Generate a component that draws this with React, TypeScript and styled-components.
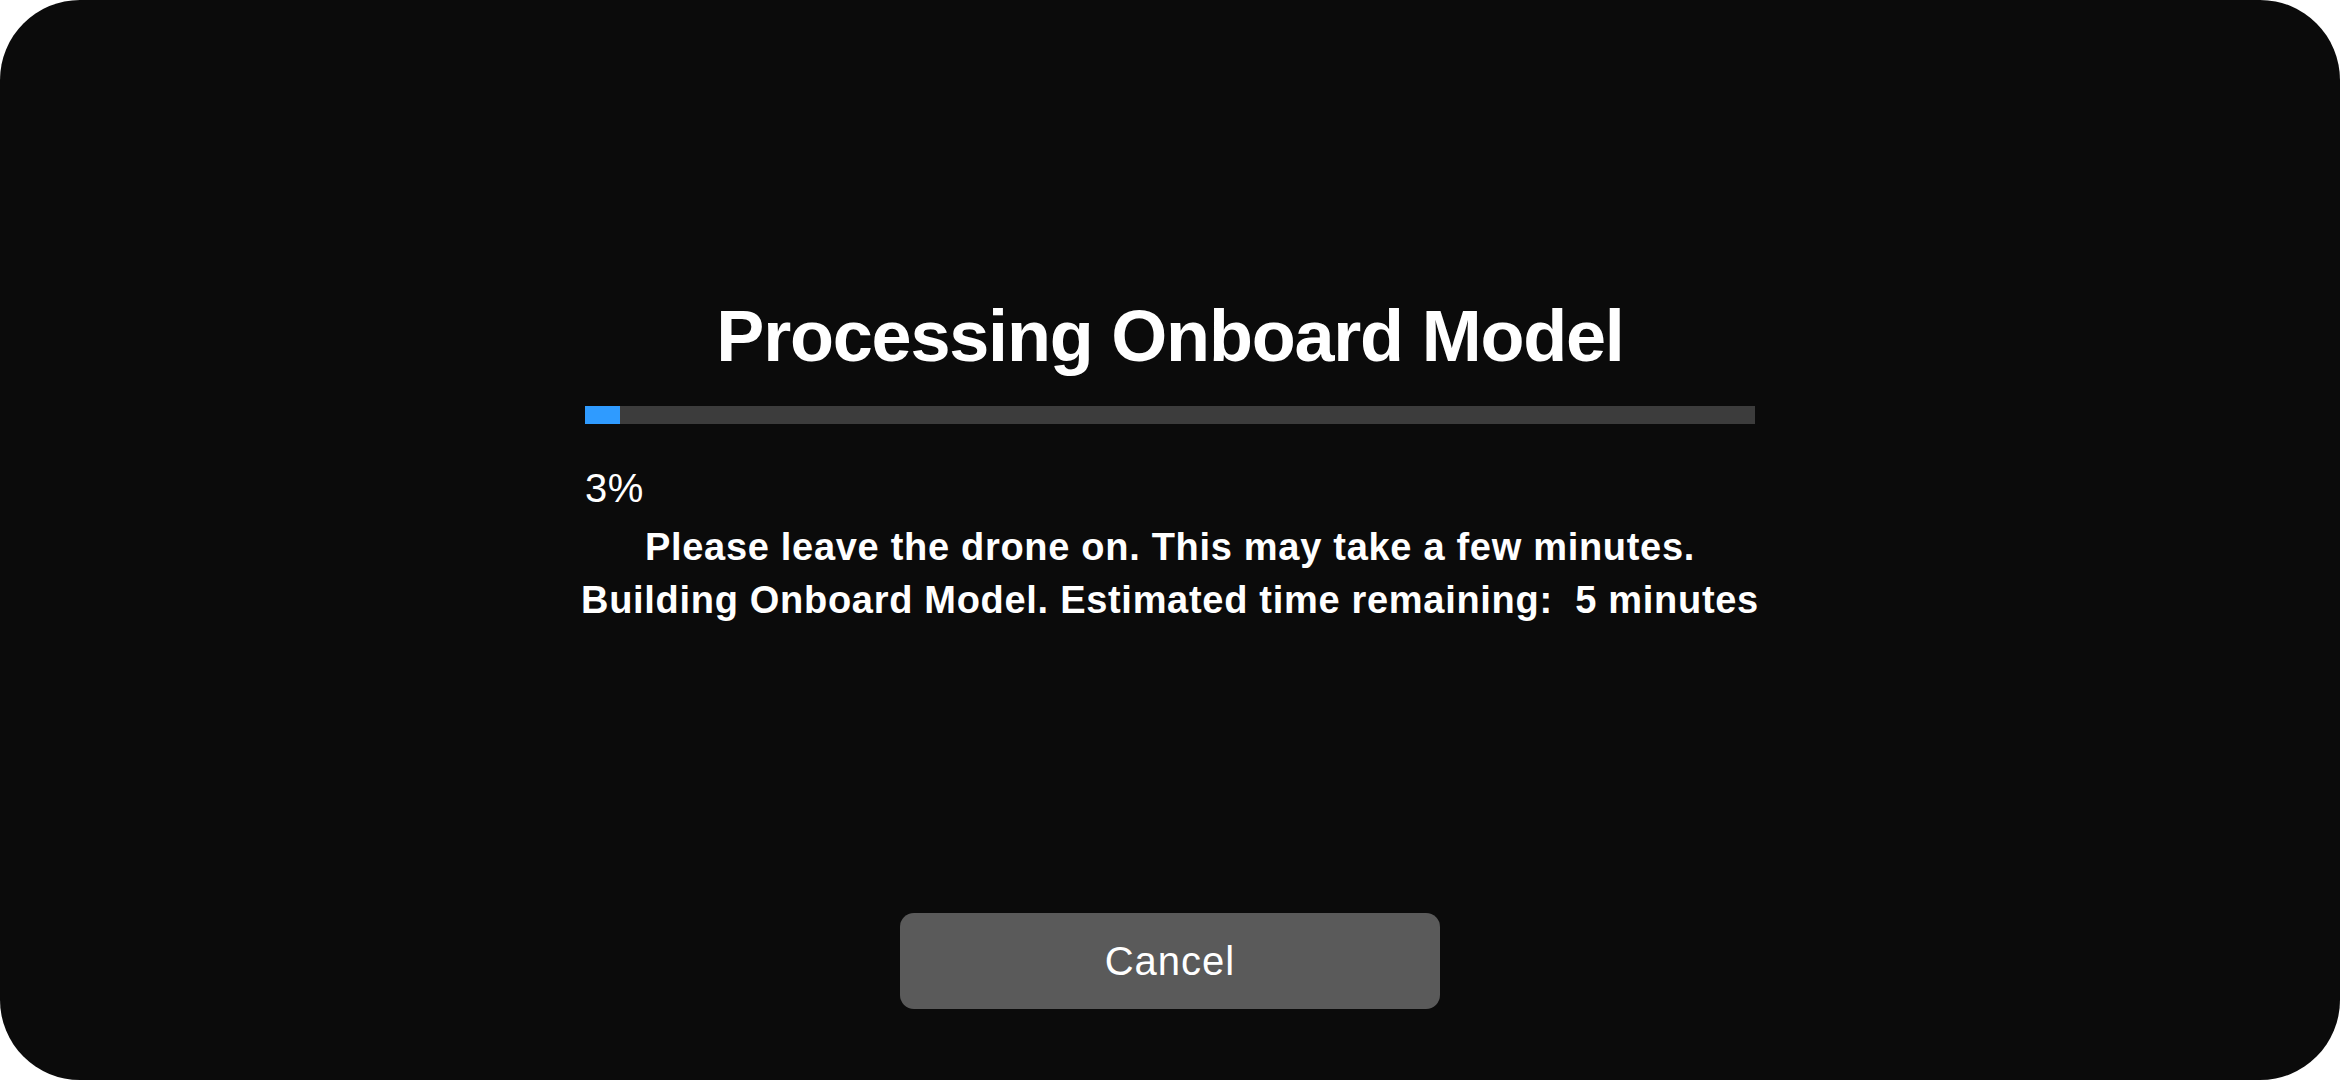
import styled, { createGlobalStyle } from "styled-components";

const GlobalStyle = createGlobalStyle`
  html, body {
    margin: 0;
    padding: 0;
    background: #ffffff;
  }
  body {
    font-family: "Liberation Sans", Arial, Helvetica, sans-serif;
    -webkit-font-smoothing: antialiased;
  }
`;

const Screen = styled.main`
  box-sizing: border-box;
  width: 100vw;
  height: 100vh;
  background-color: #0b0b0b;
  border-radius: 80px;
  display: flex;
  flex-direction: column;
  align-items: center;
  padding: 296px 0 71px;
  color: #ffffff;
  overflow: hidden;
`;

const Title = styled.h1`
  margin: 0 0 30px;
  font-size: 72px;
  line-height: 80px;
  font-weight: 700;
  letter-spacing: -1.2px;
  white-space: nowrap;
`;

const Progress = styled.div`
  width: 1170px;
  display: flex;
  flex-direction: column;
`;

const Track = styled.div`
  height: 18px;
  background-color: #3c3c3c;
  display: flex;
`;

const Fill = styled.div`
  height: 100%;
  background-color: #2f9bff;
`;

const Percent = styled.div`
  margin-top: 40px;
  font-size: 40px;
  line-height: 48px;
  font-weight: 400;
  letter-spacing: 0.5px;
`;

const Message = styled.p`
  margin: 9px 0 0;
  font-size: 38px;
  line-height: 53px;
  font-weight: 700;
  letter-spacing: 0.7px;
  text-align: center;
  white-space: pre;
`;

const CancelButton = styled.button`
  margin-top: auto;
  width: 540px;
  height: 96px;
  border: none;
  border-radius: 14px;
  background-color: #5a5a5a;
  color: #ffffff;
  font-family: "Liberation Sans", Arial, Helvetica, sans-serif;
  font-size: 40px;
  font-weight: 400;
  letter-spacing: 1px;
  cursor: pointer;
`;

const progress = 3;

const App = () => {
  return (
    <>
      <GlobalStyle />
      <Screen>
        <Title>Processing Onboard Model</Title>
        <Progress>
          <Track>
            <Fill style={{ width: `${progress}%` }} />
          </Track>
          <Percent>{progress}%</Percent>
        </Progress>
        <Message>
          {"Please leave the drone on. This may take a few minutes.\nBuilding Onboard Model. Estimated time remaining:  5 minutes"}
        </Message>
        <CancelButton type="button">Cancel</CancelButton>
      </Screen>
    </>
  );
};

export default App;
